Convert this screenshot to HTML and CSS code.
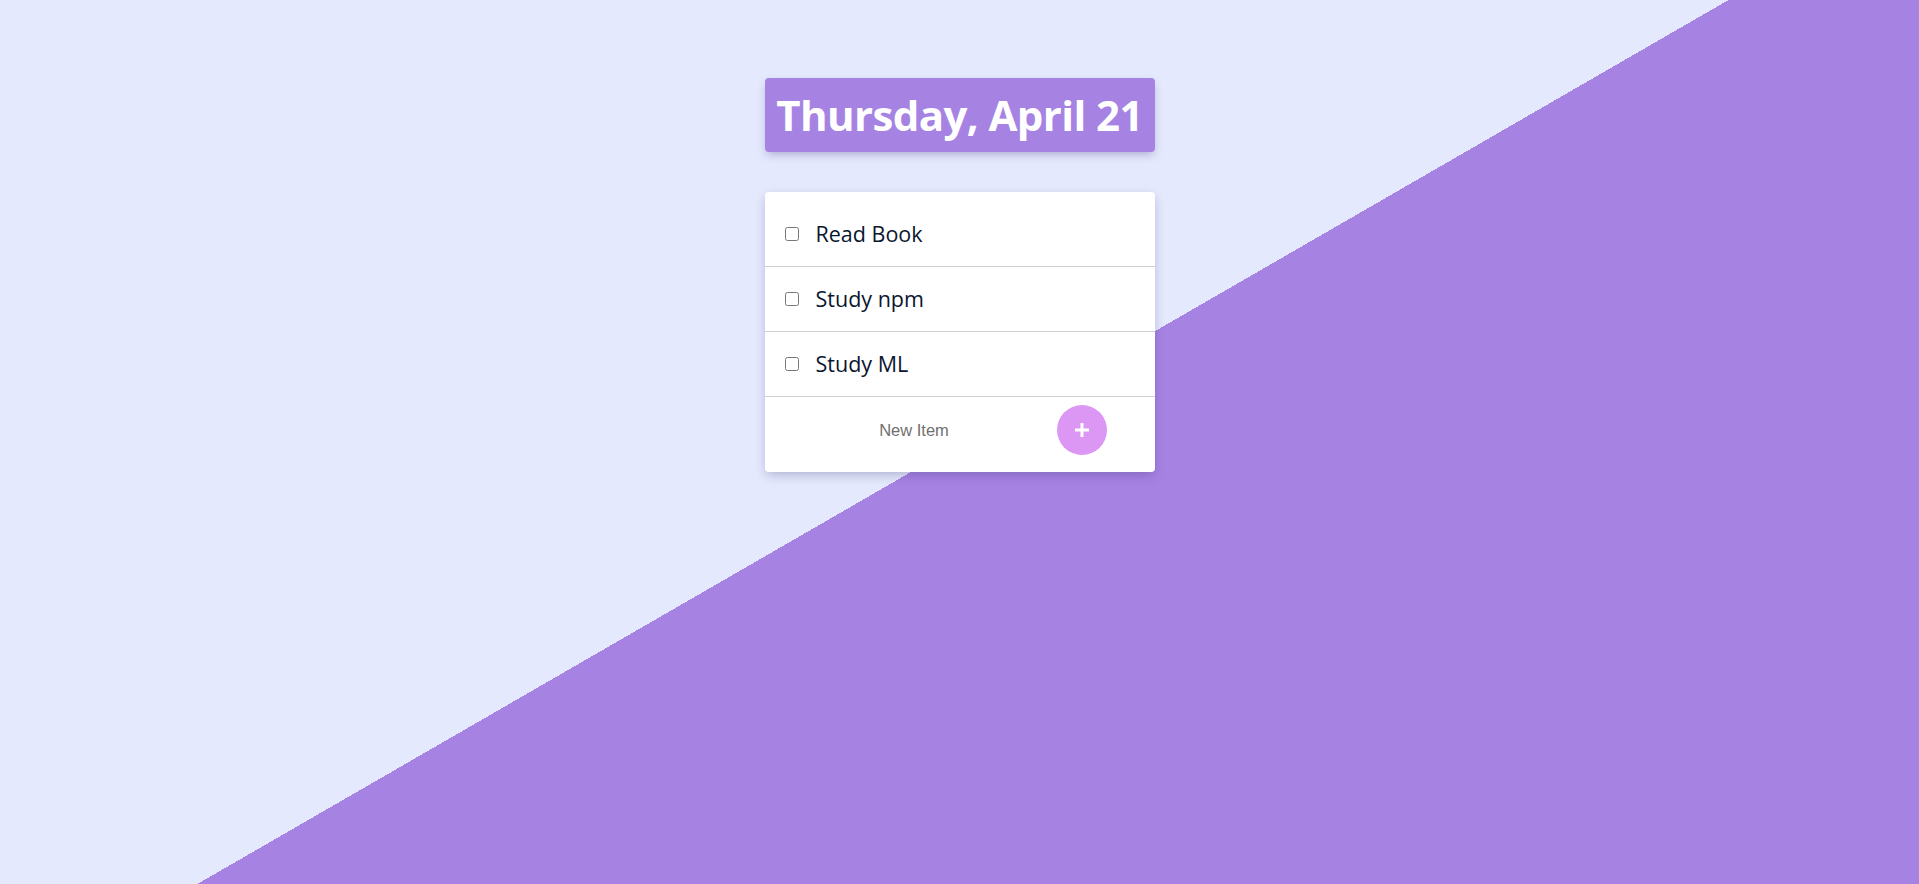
FILE: index.html
```html
<!DOCTYPE html>
<html lang="en">
<head>
<meta charset="utf-8">
<title>To Do List</title>
<link rel="stylesheet" href="styles.css">
</head>
<body>
  <main class="page">
    <div class="heading">
      <h1 class="heading-title">Thursday, April 21</h1>
    </div>
    <div class="card">
      <div class="item item-first">
        <input class="check" type="checkbox">
        <p class="item-text">Read Book</p>
      </div>
      <div class="item">
        <input class="check" type="checkbox">
        <p class="item-text">Study npm</p>
      </div>
      <div class="item">
        <input class="check" type="checkbox">
        <p class="item-text">Study ML</p>
      </div>
      <form class="new-item">
        <input class="new-input" type="text" placeholder="New Item">
        <button class="add-btn" type="button" aria-label="Add">
          <svg class="plus" width="16" height="16" viewBox="0 0 16 16">
            <path d="M8 1 V15 M1 8 H15" stroke="#ffffff" stroke-width="3" fill="none"/>
          </svg>
        </button>
      </form>
    </div>
  </main>
</body>
</html>
```
FILE: styles.css
```css
html {
  height: 100%;
  background: linear-gradient(150deg, #E4E9FD 50.1%, #A683E3 50.1%);
}

body {
  margin: 0;
  min-height: 100%;
  font-family: "Open Sans", "Lato", sans-serif;
}

.page {
  display: flex;
  flex-direction: column;
  align-items: center;
  padding-top: 78px;
  gap: 40px;
}

.heading {
  width: 390px;
  background: #A683E3;
  border-radius: 4px;
  box-shadow: 0 4px 10px -2px rgba(60, 40, 120, 0.35);
  text-align: center;
}

.heading-title {
  margin: 0;
  padding: 10px 0;
  height: 54px;
  line-height: 54px;
  font-family: "Open Sans", sans-serif;
  font-size: 42px;
  letter-spacing: -0.6px;
  font-weight: 700;
  color: #ffffff;
}

.card {
  width: 390px;
  background: #ffffff;
  border-radius: 4px;
  box-shadow: 0 4px 12px -2px rgba(40, 30, 90, 0.3);
  padding-top: 10px;
  box-sizing: border-box;
}

.item {
  display: flex;
  align-items: center;
  height: 64px;
  border-bottom: 1px solid #d0d0d0;
}

.check {
  width: 14px;
  height: 14px;
  margin: 0 17px 0 20px;
}

.item-text {
  margin: 0 0 2px;
  font-family: "Open Sans", sans-serif;
  font-size: 21.5px;
  font-weight: 400;
  color: #0b1630;
}

.new-item {
  display: flex;
  align-items: center;
  padding: 8px 0 17px 11px;
  gap: 4px;
}

.new-input {
  width: 277px;
  height: 40px;
  border: none;
  background: transparent;
  text-align: center;
  font-family: "Liberation Sans", Arial, sans-serif;
  font-size: 16.5px;
  padding: 0;
  outline: none;
}

.new-input::placeholder {
  color: #707070;
}

.add-btn {
  width: 50px;
  height: 50px;
  border-radius: 50%;
  border: 0;
  padding: 0;
  background: #DC97F5;
  display: flex;
  align-items: center;
  justify-content: center;
}

.plus {
  display: block;
}
```
